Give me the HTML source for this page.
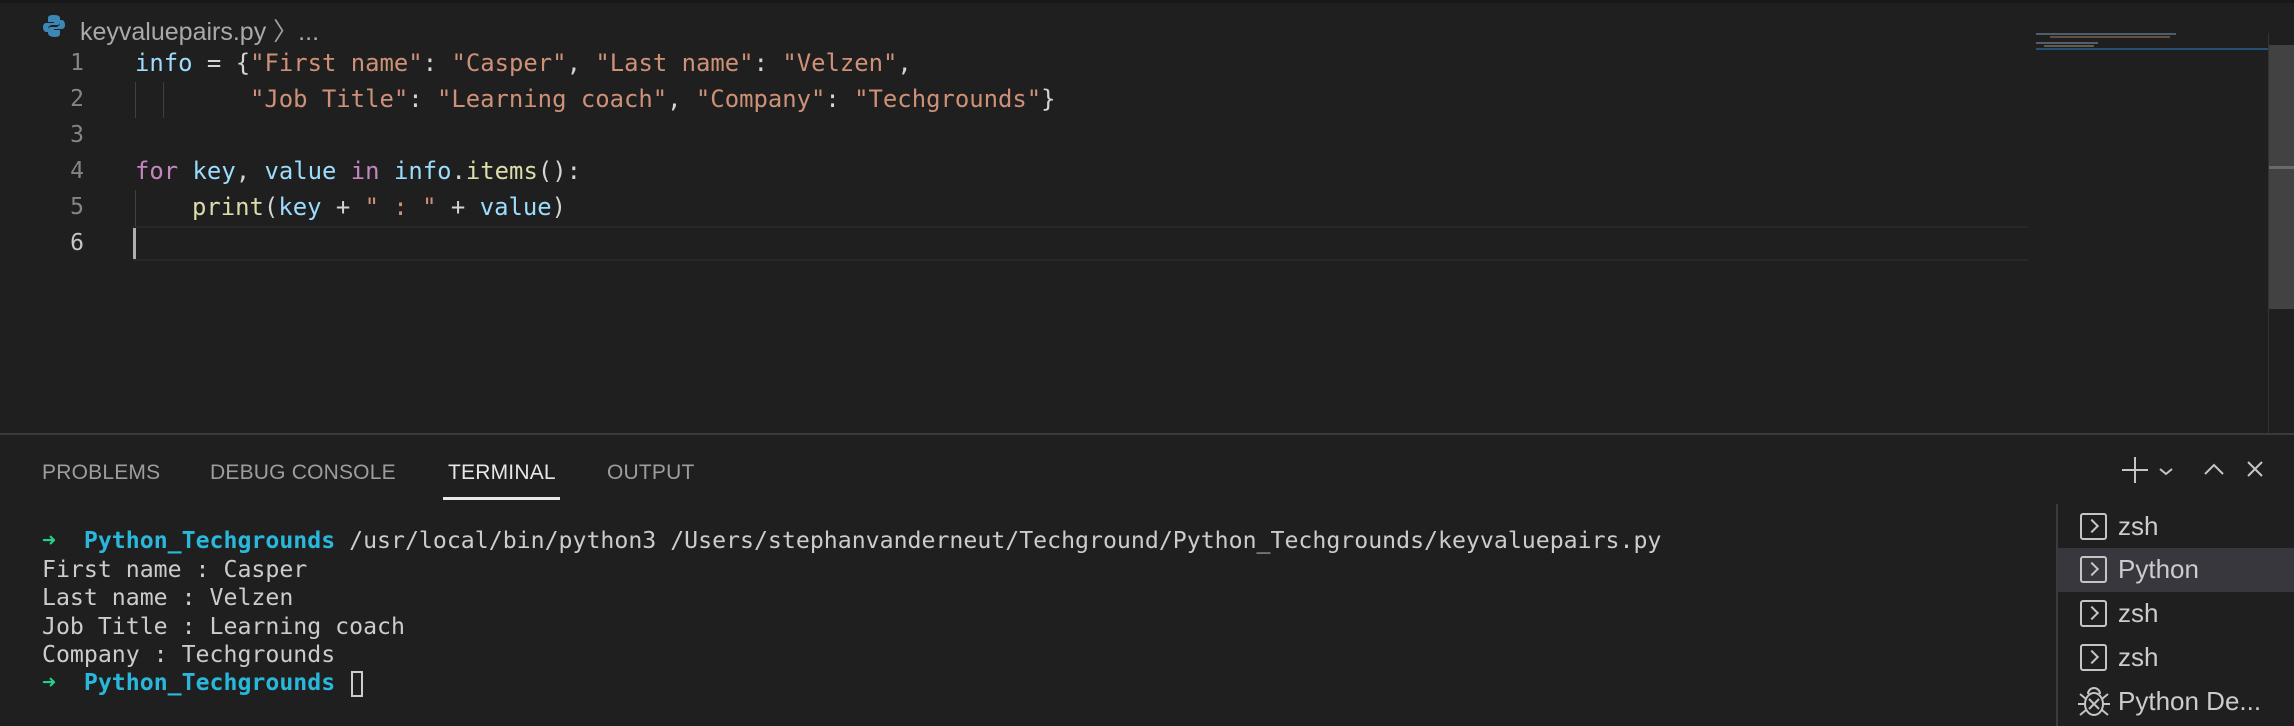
<!DOCTYPE html>
<html><head><meta charset="utf-8"><style>
*{margin:0;padding:0;box-sizing:border-box}
body{width:2294px;height:726px;background:#1f1f1f;position:relative;overflow:hidden;font-family:"Liberation Sans",sans-serif}
.abs{position:absolute;white-space:pre}
.code{font-family:"DejaVu Sans Mono","Liberation Mono",monospace;font-size:23.9px;letter-spacing:-0.0px}
.ln{font-family:"DejaVu Sans Mono","Liberation Mono",monospace;font-size:23px;color:#858585;width:40px;text-align:right;left:44px}
.v{color:#9cdcfe}.s{color:#ce9178}.k{color:#c586c0}.f{color:#dcdcaa}.p{color:#d4d4d4}
.term{font-family:"DejaVu Sans Mono","Liberation Mono",monospace;font-size:23.2px;color:#cccccc;left:42px}
.tab{font-size:21px;color:#9d9d9d;top:461px;letter-spacing:0.2px}
.item{left:2057px;width:237px;height:44px}
.item .ic{position:absolute;left:23px;top:8px;width:27px;height:27px;border:2px solid #c5c5c5;border-radius:3px}
.item .ic:after{content:"";position:absolute;left:5px;top:6px;width:8px;height:8px;border-right:2px solid #c5c5c5;border-top:2px solid #c5c5c5;transform:rotate(45deg)}
.item span{position:absolute;left:61px;top:6px;font-size:26px;color:#cccccc}
</style></head><body>
<div class="abs" style="left:0;top:0;width:2294px;height:3px;background:#181818"></div>
<svg class="abs" style="left:43px;top:14px" width="22" height="24" viewBox="0 0 22 24"><path d="M10 1C5 1 5 3 5 5v3h6v1H3C1 9 0 11 0 13s1 5 3 5h2v-3c0-2 2-4 4-4h5c2 0 3-1 3-3V4c0-2-2-3-7-3z" fill="#3c87b5"/><path d="M12 23c5 0 5-2 5-4v-3h-6v-1h8c2 0 3-2 3-4s-1-5-3-5h-2v3c0 2-2 4-4 4H8c-2 0-3 1-3 3v3c0 2 2 4 7 4z" fill="#3c87b5"/></svg>
<div class="abs" style="left:80px;top:12px;font-size:25px;color:#a9a9a9">keyvaluepairs.py <span style="color:#a0a0a0">〉</span>...</div>
<div class="abs" style="left:133px;top:226px;width:1895px;height:35px;border-top:2px solid #282828;border-bottom:2px solid #282828"></div>
<div class="abs" style="left:133px;top:228px;width:3px;height:31px;background:#aeafad"></div>
<div class="abs" style="left:135px;top:82px;width:1px;height:36px;background:#404040"></div>
<div class="abs" style="left:163px;top:82px;width:1px;height:36px;background:#404040"></div>
<div class="abs" style="left:135px;top:190px;width:1px;height:36px;background:#404040"></div>
<div class="abs ln" style="top:50px">1</div>
<div class="abs ln" style="top:86px">2</div>
<div class="abs ln" style="top:122px">3</div>
<div class="abs ln" style="top:158px">4</div>
<div class="abs ln" style="top:194px">5</div>
<div class="abs ln" style="top:230px;color:#c6c6c6">6</div>
<div class="abs code" style="left:135px;top:49px"><span class="v">info</span><span class="p"> = {</span><span class="s">"First name"</span><span class="p">: </span><span class="s">"Casper"</span><span class="p">, </span><span class="s">"Last name"</span><span class="p">: </span><span class="s">"Velzen"</span><span class="p">,</span></div>
<div class="abs code" style="left:250px;top:85px"><span class="s">"Job Title"</span><span class="p">: </span><span class="s">"Learning coach"</span><span class="p">, </span><span class="s">"Company"</span><span class="p">: </span><span class="s">"Techgrounds"</span><span class="p">}</span></div>
<div class="abs code" style="left:135px;top:157px"><span class="k">for</span> <span class="v">key</span><span class="p">, </span><span class="v">value</span> <span class="k">in</span> <span class="v">info</span><span class="p">.</span><span class="f">items</span><span class="p">():</span></div>
<div class="abs code" style="left:192px;top:193px"><span class="f">print</span><span class="p">(</span><span class="v">key</span><span class="p"> + </span><span class="s">" : "</span><span class="p"> + </span><span class="v">value</span><span class="p">)</span></div>
<div class="abs" style="left:2036px;top:33px;width:140px;height:2px;background:#6b8aa0;opacity:.6"></div>
<div class="abs" style="left:2050px;top:36px;width:120px;height:2px;background:#9a6a50;opacity:.6"></div>
<div class="abs" style="left:2036px;top:42px;width:62px;height:2px;background:#7a8aa0;opacity:.6"></div>
<div class="abs" style="left:2044px;top:45px;width:50px;height:2px;background:#8a8a70;opacity:.6"></div>
<div class="abs" style="left:2036px;top:48px;width:233px;height:2px;background:#264f78"></div>
<div class="abs" style="left:2268px;top:45px;width:26px;height:264px;background:#424242"></div>
<div class="abs" style="left:2268px;top:166px;width:26px;height:3px;background:#6a6a6a"></div>
<div class="abs" style="left:2268px;top:33px;width:1px;height:400px;background:#333"></div>
<div class="abs" style="left:0;top:433px;width:2294px;height:2px;background:#3a3a3a"></div>
<div class="abs tab" style="left:42px">PROBLEMS</div>
<div class="abs tab" style="left:210px">DEBUG CONSOLE</div>
<div class="abs tab" style="left:448px;color:#e7e7e7">TERMINAL</div>
<div class="abs tab" style="left:607px">OUTPUT</div>
<div class="abs" style="left:443px;top:497px;width:117px;height:3px;background:#e7e7e7"></div>
<svg class="abs" style="left:2120px;top:455px" width="174" height="30" viewBox="0 0 174 30" fill="none" stroke="#c5c5c5" stroke-width="2"><path d="M15 2v26M2 15h26"/><path d="M40 14l6 5 6-5"/><path d="M85 19l9-9 9 9"/><path d="M128 7l14 14M142 7l-14 14"/></svg>
<div class="abs term" style="top:527px"><span style="color:#23d18b">➜</span>  <b style="color:#29b8db">Python_Techgrounds</b> /usr/local/bin/python3 /Users/stephanvanderneut/Techground/Python_Techgrounds/keyvaluepairs.py</div>
<div class="abs term" style="top:556px">First name : Casper</div>
<div class="abs term" style="top:584px">Last name : Velzen</div>
<div class="abs term" style="top:613px">Job Title : Learning coach</div>
<div class="abs term" style="top:641px">Company : Techgrounds</div>
<div class="abs term" style="top:669px"><span style="color:#23d18b">➜</span>  <b style="color:#29b8db">Python_Techgrounds</b> </div>
<div class="abs" style="left:351px;top:671px;width:12px;height:26px;border:2px solid #cccccc"></div>
<div class="abs" style="left:2056px;top:504px;width:2px;height:222px;background:#3c3c3c"></div>
<div class="abs item" style="top:505px"><div class="ic"></div><span>zsh</span></div>
<div class="abs item" style="top:548px;background:#37373d"><div class="ic"></div><span>Python</span></div>
<div class="abs item" style="top:592px"><div class="ic"></div><span>zsh</span></div>
<div class="abs item" style="top:636px"><div class="ic"></div><span>zsh</span></div>
<div class="abs item" style="top:680px"><svg style="position:absolute;left:20px;top:6px" width="34" height="32" viewBox="0 0 34 32" fill="none" stroke="#c5c5c5" stroke-width="2"><path d="M11 8a6 6 0 0 1 12 0"/><ellipse cx="17" cy="18" rx="9" ry="11"/><path d="M12 13l10 10M22 13l-10 10"/><path d="M1 18h7M26 18h7M3 8l6 5M31 8l-6 5M3 29l6-5M31 29l-6-5"/></svg><span>Python De...</span></div>
</body></html>
